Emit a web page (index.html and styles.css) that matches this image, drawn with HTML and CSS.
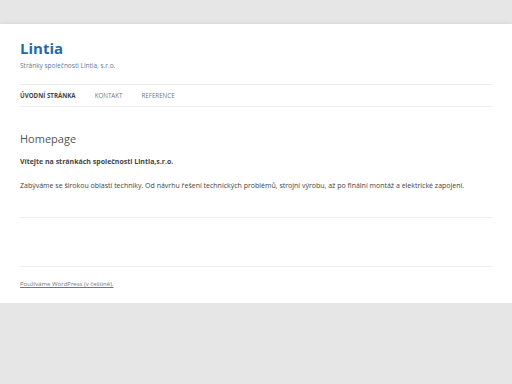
FILE: index.html
```html
<!DOCTYPE html>
<html lang="cs">
<head>
<meta charset="utf-8">
<title>Lintia</title>
<link rel="stylesheet" href="styles.css">
</head>
<body>

<div class="site">
  <header class="site-header">
    <h1 class="site-title"><a href="#">Lintia</a></h1>
    <h2 class="site-description">Stránky společnosti Lintia, s.r.o.</h2>

    <nav class="main-nav">
      <a href="#" class="current">Úvodní stránka</a>
      <a href="#">Kontakt</a>
      <a href="#">Reference</a>
    </nav>
  </header>

  <div class="site-content">
    <article class="entry">
      <h1 class="entry-title">Homepage</h1>
      <p><strong>Vítejte na stránkách společnosti Lintia,s.r.o.</strong></p>
      <p>Zabýváme se širokou oblastí techniky. Od návrhu řešení technických problémů, strojní výrobu, až po finální montáž a elektrické zapojení.</p>
    </article>
  </div>

  <div class="spacer"></div>

  <footer class="site-footer">
    <a href="#">Používáme WordPress (v češtině).</a>
  </footer>
</div>

</body>
</html>
```

FILE: styles.css
```css
body {
  margin: 0;
  background: #e6e6e6;
  font-family: "Open Sans", Arial, sans-serif;
  color: #444;
}

.site {
  margin-top: 24px;
  padding: 0 20px;
  background: #fff;
  box-shadow: 0 2px 6px rgba(100, 100, 100, 0.3);
}

.site-header {
  padding: 14px 0 0;
}

.site-title {
  margin: 0;
  font-size: 15px;
  line-height: 20px;
  font-weight: bold;
}

.site-title a {
  color: #1f6ba6;
  text-decoration: none;
}

.site-description {
  margin: 3px 0 0;
  font-size: 6.5px;
  line-height: 10px;
  font-weight: normal;
  color: #5b7b98;
}

.main-nav {
  display: flex;
  gap: 19px;
  margin-top: 13px;
  border-top: 1px solid #ededed;
  border-bottom: 1px solid #ededed;
  height: 21px;
  align-items: center;
}

.main-nav a {
  font-size: 6.2px;
  text-transform: uppercase;
  text-decoration: none;
  color: #777;
}

.main-nav a.current {
  font-weight: bold;
  color: #444;
}

.site-content {
  padding-top: 22px;
}

.entry {
  padding-bottom: 26px;
  border-bottom: 1px solid #ededed;
}

.entry-title {
  margin: 0 0 8px;
  font-size: 11px;
  line-height: 20px;
  font-weight: normal;
  color: #555;
}

.entry p {
  margin: 0 0 14px;
  font-size: 7px;
  line-height: 10px;
}

.entry p:last-child {
  margin-bottom: 0;
}

.spacer {
  height: 48px;
  border-bottom: 1px solid #ededed;
}

.site-footer {
  padding: 12px 0 14px;
  font-size: 6px;
  line-height: 10px;
}

.site-footer a {
  color: #757575;
}
```
